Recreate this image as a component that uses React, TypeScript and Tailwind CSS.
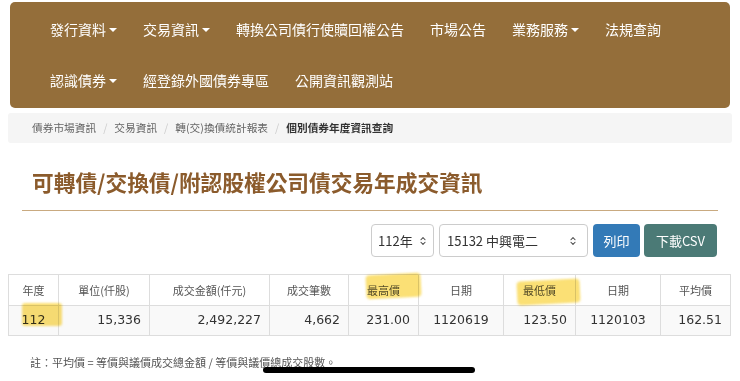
import { ChevronsUpDown } from "lucide-react"

const navRows = [
  [
    { label: "發行資料", caret: true },
    { label: "交易資訊", caret: true },
    { label: "轉換公司債行使贖回權公告" },
    { label: "市場公告" },
    { label: "業務服務", caret: true },
    { label: "法規查詢" },
  ],
  [
    { label: "認識債券", caret: true },
    { label: "經登錄外國債券專區" },
    { label: "公開資訊觀測站" },
  ],
]

const crumbs = ["債券市場資訊", "交易資訊", "轉(交)換債統計報表"]

const headers = ["年度", "單位(仟股)", "成交金額(仟元)", "成交筆數", "最高價", "日期", "最低價", "日期", "平均價"]
const row = ["112", "15,336", "2,492,227", "4,662", "231.00", "1120619", "123.50", "1120103", "162.51"]
const widths = ["w-[50px]", "w-[91px]", "w-[120px]", "w-[79px]", "w-[70px]", "w-[85px]", "w-[72px]", "w-[85px]", "w-[70px]"]
const align = ["text-center", "text-right", "text-right", "text-right", "text-right", "text-center", "text-right", "text-center", "text-right"]

function Caret() {
  return <span className="ml-[3px] inline-block h-0 w-0 border-x-[4px] border-t-[4px] border-x-transparent border-t-white align-middle" />
}

export default function App() {
  return (
    <div className="relative h-[381px] w-[740px] overflow-hidden bg-white font-['Noto_Sans_CJK_TC',sans-serif]">
      {/* top nav */}
      <nav className="mx-[10px] mt-[2px] h-[106px] rounded-[5px] bg-[#946e3a] pl-[27px] pt-[2px]">
        {navRows.map((r, i) => (
          <div key={i} className="flex h-[51px] items-center">
            {r.map((item) => (
              <span key={item.label} className="flex items-center px-[13px] text-[14px] text-white">
                {item.label}
                {item.caret && <Caret />}
              </span>
            ))}
          </div>
        ))}
      </nav>

      {/* breadcrumb */}
      <div className="mx-[8px] mt-[5px] flex h-[30px] items-center rounded-[3px] bg-[#f5f5f5] pl-[24px] text-[10.7px] text-[#666]">
        {crumbs.map((c) => (
          <span key={c} className="flex items-center">
            {c}
            <span className="px-[7px] text-[#ccc]">/</span>
          </span>
        ))}
        <span className="font-bold text-[#333]">個別債券年度資訊查詢</span>
      </div>

      <h1 className="ml-[32px] mt-[24px] text-[21.7px] font-bold leading-[30px] text-[#8b5b2c]">
        可轉債/交換債/附認股權公司債交易年成交資訊
      </h1>
      <div className="mx-[22px] mt-[13px] h-px bg-[#c9aa80]" />

      {/* controls */}
      <div className="mt-[13px] flex h-[33px] justify-end gap-[5px] pr-[23px] text-[13px]">
        <div className="flex w-[63px] items-center justify-between rounded-[4px] border border-[#ccc] bg-white pl-[6px] pr-[5px] text-[#333]">
          <span>112年</span>
          <ChevronsUpDown size={10} strokeWidth={2.5} className="text-[#444]" />
        </div>
        <div className="flex w-[149px] items-center justify-between rounded-[4px] border border-[#ccc] bg-white pl-[7px] pr-[9px] text-[#333]">
          <span>15132 中興電二</span>
          <ChevronsUpDown size={10} strokeWidth={2.5} className="text-[#444]" />
        </div>
        <button className="w-[47px] rounded-[4px] bg-[#337ab7] text-white">列印</button>
        <button className="ml-[-1px] w-[73px] rounded-[4px] bg-[#4b7a76] text-white">下載CSV</button>
      </div>

      {/* table */}
      <table className="ml-[8px] mt-[17px] w-[722px] table-fixed border-collapse">
        <colgroup>
          {widths.map((w, i) => (
            <col key={i} className={w} />
          ))}
        </colgroup>
        <thead>
          <tr className="h-[31px]">
            {headers.map((h, i) => (
              <th key={i} className="border border-[#ddd] text-center text-[11px] font-normal text-[#555]">
                {h}
              </th>
            ))}
          </tr>
        </thead>
        <tbody>
          <tr className="h-[30px] bg-[#f9f9f9]">
            {row.map((v, i) => (
              <td
                key={i}
                className={`border border-[#ddd] px-[8px] font-['DejaVu_Sans',sans-serif] text-[12.5px] text-[#333] ${align[i]}`}
              >
                {v}
              </td>
            ))}
          </tr>
        </tbody>
      </table>

      <p className="mt-[18px] pl-[30px] text-[11px] leading-[16px] text-[#555]">
        註：平均價 = 等價與議價成交總金額 / 等價與議價總成交股數。
      </p>

      {/* highlighter marks */}
      <div className="pointer-events-none absolute left-[22px] top-[303px] h-[23px] w-[40px] rounded-[3px] bg-[#f9d33a] opacity-70 mix-blend-multiply blur-[1px]" />
      <div className="pointer-events-none absolute left-[366px] top-[274px] h-[24px] w-[55px] -rotate-3 rounded-[4px] bg-[#f9d33a] opacity-70 mix-blend-multiply blur-[1px]" />
      <div className="pointer-events-none absolute left-[517px] top-[280px] h-[24px] w-[63px] -rotate-3 rounded-[4px] bg-[#f9d33a] opacity-70 mix-blend-multiply blur-[1px]" />

      {/* home indicator */}
      <div className="absolute left-[263px] top-[367px] h-[6px] w-[212px] rounded-full bg-black" />
    </div>
  )
}
